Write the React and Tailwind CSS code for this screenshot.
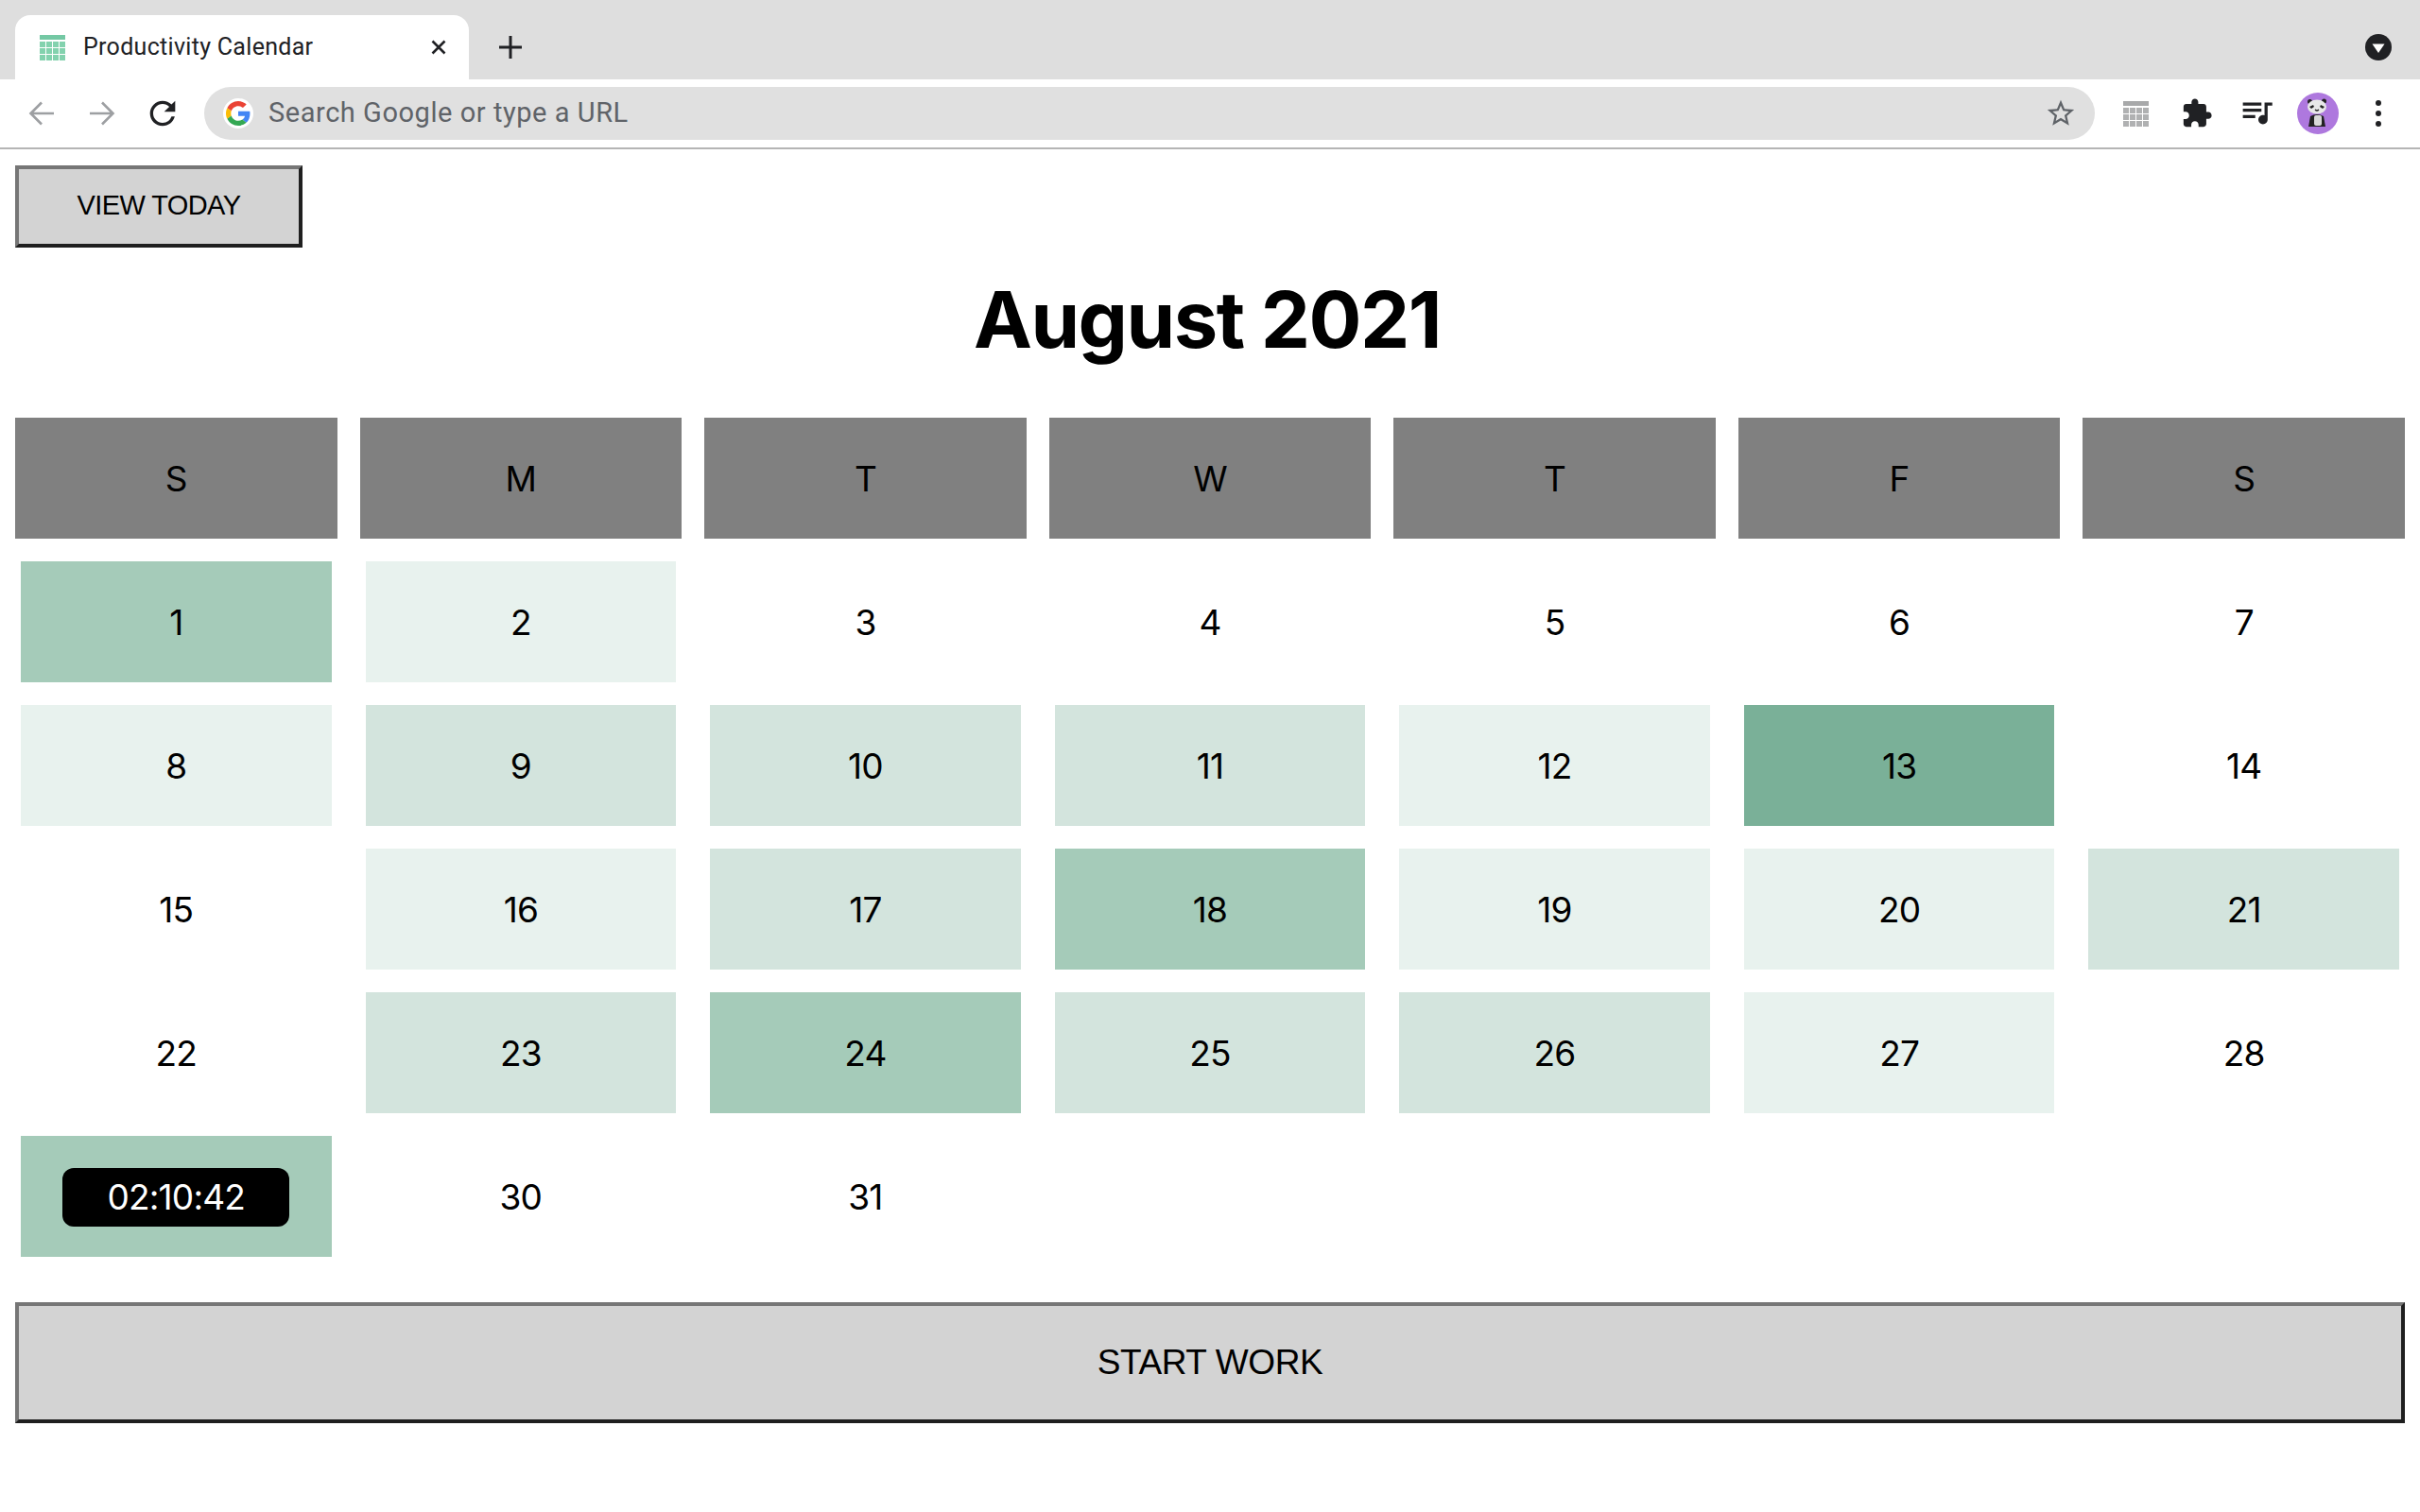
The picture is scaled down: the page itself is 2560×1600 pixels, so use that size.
const HEADERS = ['S', 'M', 'T', 'W', 'T', 'F', 'S'];

const LEVELS = {
  0: '',
  1: 'bg-[#e8f2ee]',
  2: 'bg-[#d3e4dd]',
  3: 'bg-[#a5cbb9]',
  4: 'bg-[#7ab098]',
};

// activity level per day of the month, index 0 = Aug 1
const DAY_LEVELS = [
  3, 1, 0, 0, 0, 0, 0,
  1, 2, 2, 2, 1, 4, 0,
  0, 1, 2, 3, 1, 1, 2,
  0, 2, 3, 2, 2, 1, 0,
  3, 0, 0,
];

function GridIcon({ header, cell, size = 27 }) {
  const cols = [0, 7, 14, 21];
  const rows = [7, 14, 21];
  return (
    <svg width={size} height={size} viewBox="0 0 27 27" className="shrink-0">
      <rect x="0" y="0" width="27" height="5" fill={header} />
      {rows.map((y) =>
        cols.map((x) => <rect key={`${x}-${y}`} x={x} y={y} width="6" height="6" fill={cell} />)
      )}
    </svg>
  );
}

function ArrowIcon({ flip }) {
  return (
    <svg width="28" height="28" viewBox="0 0 28 28" className={flip ? 'shrink-0 -scale-x-100' : 'shrink-0'}>
      <path d="M27 14H3M14 2.5 2.5 14 14 25.5" fill="none" stroke="#9d9fa2" strokeWidth="2.6" />
    </svg>
  );
}

function ChromeBar() {
  return (
    <div>
      {/* Tab strip */}
      <div className="h-[84px] bg-[#dedede] flex items-end pl-4 pr-[30px]">
        <div className="w-[480px] h-[68px] bg-white rounded-t-[16px] flex items-center pl-[26px] pr-[24px]">
          <GridIcon header="#74c8a4" cell="#83d2ae" />
          <span className="ml-[19px] flex-1 text-[25px] text-[#202124] font-['Roboto',sans-serif] tracking-[0.3px]">
            Productivity Calendar
          </span>
          <svg width="16" height="16" viewBox="0 0 16 16">
            <path d="M1.5 1.5l13 13M14.5 1.5l-13 13" stroke="#202124" strokeWidth="2.6" />
          </svg>
        </div>
        <div className="h-[68px] flex items-center ml-[32px]">
          <svg width="24" height="24" viewBox="0 0 24 24">
            <path d="M12 0v24M0 12h24" stroke="#202124" strokeWidth="3" />
          </svg>
        </div>
        <div className="h-[68px] flex items-center ml-auto">
          <svg width="28" height="28" viewBox="0 0 28 28">
            <circle cx="14" cy="14" r="14" fill="#202124" />
            <path d="M7.5 10.5h13L14 20z" fill="#fff" />
          </svg>
        </div>
      </div>

      {/* Toolbar */}
      <div className="h-[74px] bg-white border-b-2 border-[#b5b5b5] flex items-center pl-[30px] pr-[40px]">
        <ArrowIcon />
        <div className="ml-[36px]">
          <ArrowIcon flip />
        </div>
        <svg width="40" height="40" viewBox="0 0 24 24" className="ml-[30px] shrink-0">
          <path
            d="M17.65 6.35A7.958 7.958 0 0 0 12 4c-4.42 0-7.99 3.58-7.99 8s3.57 8 7.99 8c3.73 0 6.84-2.55 7.73-6h-2.08A5.99 5.99 0 0 1 12 18c-3.31 0-6-2.69-6-6s2.69-6 6-6c1.66 0 3.14.69 4.22 1.78L13 11h7V4l-2.35 2.35z"
            fill="#202124"
          />
        </svg>
        <div className="ml-[24px] h-[56px] flex-1 bg-[#e0e0e0] rounded-full flex items-center pl-[20px] pr-[19px]">
          <div className="w-[32px] h-[32px] rounded-full bg-white flex items-center justify-center shrink-0">
            <svg width="26" height="26" viewBox="0 0 48 48">
              <path fill="#EA4335" d="M24 9.5c3.54 0 6.71 1.22 9.21 3.6l6.85-6.85C35.9 2.38 30.47 0 24 0 14.62 0 6.51 5.38 2.56 13.22l7.98 6.19C12.43 13.72 17.74 9.5 24 9.5z" />
              <path fill="#4285F4" d="M46.98 24.55c0-1.57-.15-3.09-.38-4.55H24v9.02h12.94c-.58 2.96-2.26 5.48-4.78 7.18l7.73 6c4.51-4.18 7.09-10.36 7.09-17.65z" />
              <path fill="#FBBC05" d="M10.53 28.59c-.48-1.45-.76-2.99-.76-4.59s.27-3.14.76-4.59l-7.98-6.19C.92 16.46 0 20.12 0 24c0 3.88.92 7.54 2.56 10.78l7.97-6.19z" />
              <path fill="#34A853" d="M24 48c6.48 0 11.93-2.13 15.89-5.81l-7.73-6c-2.15 1.45-4.92 2.3-8.16 2.3-6.26 0-11.57-4.22-13.47-9.91l-7.98 6.19C6.51 42.62 14.62 48 24 48z" />
            </svg>
          </div>
          <span className="ml-[16px] flex-1 text-[29px] text-[#5f6368] font-['Roboto',sans-serif] tracking-[0.55px]">
            Search Google or type a URL
          </span>
          <svg width="34" height="34" viewBox="0 0 24 24" className="shrink-0">
            <path
              d="M22 9.24l-7.19-.62L12 2 9.19 8.63 2 9.24l5.46 4.73L5.82 21 12 17.27 18.18 21l-1.63-7.03L22 9.24zM12 15.4l-3.76 2.27 1-4.28-3.32-2.88 4.38-.38L12 6.1l1.71 4.04 4.38.38-3.32 2.88 1 4.28L12 15.4z"
              fill="#5f6368"
            />
          </svg>
        </div>
        <div className="ml-[30px]">
          <GridIcon header="#a8a9aa" cell="#b0b1b2" />
        </div>
        <svg width="34" height="34" viewBox="0 0 24 24" className="ml-[34px] shrink-0">
          <path
            d="M20.5 11H19V7c0-1.1-.9-2-2-2h-4V3.5C13 2.12 11.88 1 10.5 1S8 2.12 8 3.5V5H4c-1.1 0-1.99.9-1.99 2v3.8H3.5c1.49 0 2.7 1.21 2.7 2.7s-1.21 2.7-2.7 2.7H2V20c0 1.1.9 2 2 2h3.8v-1.5c0-1.49 1.21-2.7 2.7-2.7 1.49 0 2.7 1.21 2.7 2.7V22H17c1.1 0 2-.9 2-2v-4h1.5c1.38 0 2.5-1.12 2.5-2.5S21.88 11 20.5 11z"
            fill="#202124"
          />
        </svg>
        <svg width="36" height="36" viewBox="2 4 22 18" className="ml-[30px] shrink-0">
          <path
            d="M15 6H3v2h12V6zm0 4H3v2h12v-2zM3 16h8v-2H3v2zM17 6v8.18c-.31-.11-.65-.18-1-.18-1.66 0-3 1.34-3 3s1.34 3 3 3 3-1.34 3-3V8h3V6h-5z"
            fill="#202124"
          />
        </svg>
        <svg width="44" height="44" viewBox="0 0 44 44" className="ml-[23px] shrink-0">
          <circle cx="22" cy="22" r="22" fill="#ae78de" />
          <ellipse cx="13.5" cy="9.5" rx="2.5" ry="2.5" fill="#222" />
          <ellipse cx="28.5" cy="9" rx="2.5" ry="2.5" fill="#222" />
          <ellipse cx="21" cy="15" rx="10" ry="7.5" fill="#e8e8e8" />
          <path d="M13 15l4-2 1 2-3 2zM29 15l-4-2-1 2 3 2z" fill="#222" />
          <path d="M19 18q2 2 4 0" stroke="#222" strokeWidth="1.2" fill="none" />
          <path d="M14 25q7-4 14 0l2 11H12z" fill="#222" />
          <rect x="18" y="24" width="8" height="11" rx="2" fill="#d8d8d8" />
        </svg>
        <svg width="8" height="30" viewBox="0 0 8 30" className="ml-[38px] shrink-0">
          <circle cx="4" cy="4" r="3" fill="#202124" />
          <circle cx="4" cy="15" r="3" fill="#202124" />
          <circle cx="4" cy="26" r="3" fill="#202124" />
        </svg>
      </div>
    </div>
  );
}

function DayCell({ day, level, timer }) {
  return (
    <div className={`h-[128px] mx-[6px] pt-[2px] flex items-center justify-center ${LEVELS[level]}`}>
      {timer ? (
        <span className="w-[240px] h-[62px] bg-black text-white rounded-[12px] flex items-center justify-center">
          {timer}
        </span>
      ) : (
        day
      )}
    </div>
  );
}

export default function App() {
  return (
    <div className="min-h-[1600px] bg-white text-black font-['Inter',sans-serif]">
      <ChromeBar />

      <section className="px-4">
        <button className="mt-[17px] pb-[2px] block w-[304px] h-[87px] bg-[#d3d3d3] border-4 border-t-[#767676] border-l-[#767676] border-r-[#1f1f1f] border-b-[#1f1f1f] text-[29px] font-['Liberation_Sans',sans-serif] tracking-[-0.6px]">
          VIEW TODAY
        </button>

        <h1 className="mt-[28px] pr-[6px] h-[97px] leading-[97px] text-center text-[83px] font-bold tracking-[-1.5px]">
          August 2021
        </h1>

        <div className="mt-[55px] grid grid-cols-7 gap-6 text-[37px] tracking-[-0.8px]">
          {HEADERS.map((label, i) => (
            <div key={i} className="h-[128px] pt-[2px] bg-[#808080] flex items-center justify-center">
              {label}
            </div>
          ))}
          {DAY_LEVELS.map((level, i) => (
            <DayCell key={i} day={i + 1} level={level} timer={i === 28 ? '02:10:42' : null} />
          ))}
        </div>

        <button className="mt-12 block w-full h-[128px] bg-[#d3d3d3] border-4 border-t-[#767676] border-l-[#767676] border-r-[#1f1f1f] border-b-[#1f1f1f] text-[37px] font-['Liberation_Sans',sans-serif] tracking-[-0.4px]">
          START WORK
        </button>
      </section>
    </div>
  );
}
